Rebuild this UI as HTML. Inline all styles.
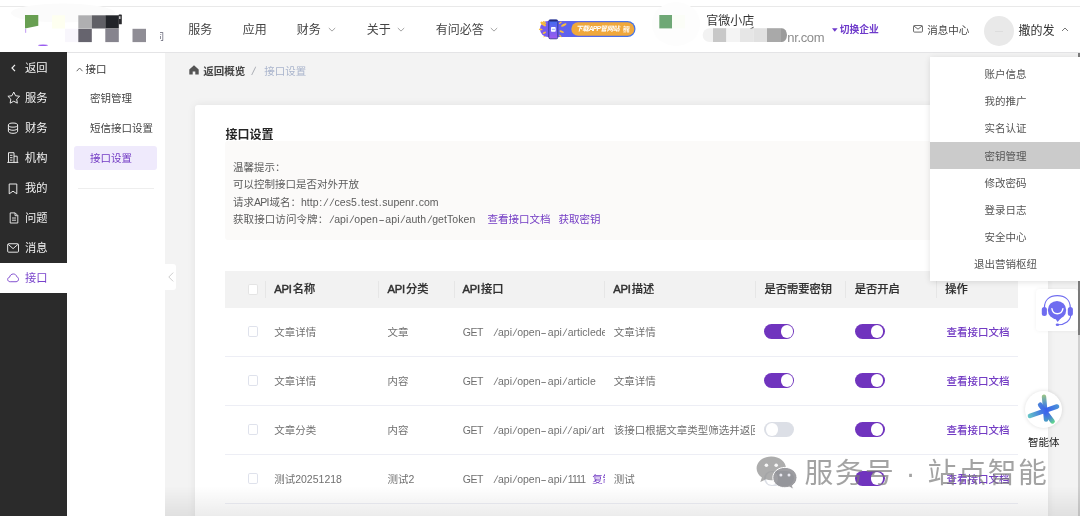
<!DOCTYPE html>
<html lang="zh-CN">
<head>
<meta charset="utf-8">
<title>接口设置</title>
<style>
*{box-sizing:border-box;margin:0;padding:0}
html,body{width:1080px;height:516px;overflow:hidden}
body{position:relative;background:#f3f3f3;font-family:"Liberation Sans","Noto Sans CJK SC",sans-serif;font-size:10.5px;color:#555;-webkit-font-smoothing:antialiased}
#w{position:absolute;left:0;top:0;width:1080px;height:516px;will-change:transform}
.a{position:absolute}
.t{position:absolute;white-space:nowrap;height:16px;line-height:16px}
svg{position:absolute;overflow:visible}
/* header */
#hdr{left:0;top:0;width:1080px;height:53px;background:#fff;border-bottom:1px solid #e4e4e6}
#topline{left:0;top:6px;width:1080px;height:1px;background:#e9e9e9}
.nav{font-size:12px;color:#444;margin-top:.3px}
/* sidebars */
#s1{left:0;top:52px;width:67px;height:464px;background:#2b2b2b}
#s1 .t{left:25px;font-size:11.25px;color:#f2f2f2}
#s1act{left:0;top:211px;width:67px;height:30px;background:#fff}
#s2{left:67px;top:53px;width:98px;height:463px;background:#fff}
/* main */
#card{left:195px;top:104.5px;width:853.2px;height:430px;background:#fff;border-radius:3px;box-shadow:0 0 9px rgba(0,0,0,.075)}
#tip{left:225px;top:141px;width:792px;height:99px;background:#fbfaf9;border-radius:3px}
.tip{left:233px;color:#5c5c5c}
.lk{color:#733cc4}
#thead{left:225px;top:271px;width:793px;height:36.5px;background:#f2f2f2}
.th{font-weight:500;color:#303030;top:281px;font-size:11.25px;-webkit-text-stroke:.2px #303030}
.vd{width:1px;height:17px;top:280.5px;background:#e6e6e6}
.row{left:225px;width:792.8px;height:1px;background:#edeef5}
.td{color:#707070}
.cb{width:10.4px;height:11px;left:248.1px;background:#fff;border:1px solid #dfe2ec;border-radius:1.8px}
.sw{width:30.2px;height:15.2px;border-radius:7.6px;background:#7034be}
.sw i{position:absolute;right:1.4px;top:1.4px;width:12.4px;height:12.4px;border-radius:50%;background:#fff}
.sw.off{background:#dcdfe6}
.sw.off i{right:auto;left:1.4px}
i.s,i.d,i.h,i.n{font-style:normal}
i.n{letter-spacing:-.9px}
.td i.s+i.s{margin-left:-.8px}
i.s{display:inline-block;width:5.9px;text-align:center;transform:skewX(-14deg);position:relative;left:.4px}
i.d{padding:0 .7px}
i.h{display:inline-block;width:7.35px;text-align:center;transform:scaleX(1.75)}
.g{letter-spacing:-.45px;margin-right:9.2px}
.cap{letter-spacing:-.7px;margin-right:.7px}
.thc{font-weight:400;letter-spacing:-.25px;margin-right:1.2px;-webkit-text-stroke:.45px #303030}
.op{left:946.4px;color:#733cc4;font-weight:500}
/* dropdown */
#dd{left:930px;top:56.5px;width:150px;height:224.5px;background:#fff;box-shadow:0 1px 6px rgba(0,0,0,.12)}
#dd .t{left:.4px;width:150px;text-align:center;color:#555}
#ddh{left:0;top:85px;width:150px;height:27px;background:#cbcbcb}
</style>
</head>
<body>
<div id="w">
<!-- main content -->
<div class="a" id="card"></div>
<!-- breadcrumb -->
<svg width="10" height="10" style="left:188.6px;top:65.4px" viewBox="0 0 10 10"><path d="M5 0.3 L9.7 4.6 V9.6 H6.3 V6.4 H3.7 V9.6 H0.3 V4.6 Z" fill="#555"/></svg>
<div class="t" style="left:203.2px;top:62.7px;font-weight:700;color:#444">返回概览</div>
<div class="t" style="left:252.4px;top:62.5px;color:#a8abb2;font-size:11.5px;transform:skewX(-12deg)">/</div>
<div class="t" style="left:264.2px;top:62.7px;color:#a9b4cc">接口设置</div>
<div class="t" style="left:225.5px;top:126.5px;font-size:12px;font-weight:700;color:#262626">接口设置</div>
<div class="a" id="tip"></div>
<div class="t tip" style="top:158.5px">温馨提示：</div>
<div class="t tip" style="top:175.8px">可以控制接口是否对外开放</div>
<div class="t tip" style="top:193.5px">请求<span class="cap">API</span>域名：http<i class="d">:</i><i class="s">/</i><i class="s">/</i>ces5<i class="d">.</i>test<i class="d">.</i>supenr<i class="d">.</i>com</div>
<div class="t tip" style="top:211px;letter-spacing:.08px">获取接口访问令牌：<i class="s">/</i>api<i class="s">/</i>open<i class="h">-</i>api<i class="s">/</i>auth<i class="s">/</i>getToken</div>
<div class="t lk" style="left:487.6px;top:211px">查看接口文档</div>
<div class="t lk" style="left:558.6px;top:211px">获取密钥</div>
<!-- table -->
<div class="a" id="thead"></div>
<div class="a cb" style="top:284.2px;border-color:#e4e4e4"></div>
<div class="a vd" style="left:264.9px"></div>
<div class="a vd" style="left:378.3px"></div>
<div class="a vd" style="left:453.5px"></div>
<div class="a vd" style="left:604.4px"></div>
<div class="a vd" style="left:755px"></div>
<div class="a vd" style="left:845.2px"></div>
<div class="a vd" style="left:935.6px"></div>
<div class="t th" style="left:274.2px"><span class="thc">API</span>名称</div>
<div class="t th" style="left:387.5px"><span class="thc">API</span>分类</div>
<div class="t th" style="left:462.5px"><span class="thc">API</span>接口</div>
<div class="t th" style="left:613.2px"><span class="thc">API</span>描述</div>
<div class="t th" style="left:764.4px">是否需要密钥</div>
<div class="t th" style="left:854.8px">是否开启</div>
<div class="t th" style="left:945.3px">操作</div>
<!-- row 1 -->
<div class="a cb" style="top:325.9px"></div>
<div class="t td" style="left:274.2px;top:324.0px">文章详情</div>
<div class="t td" style="left:387.5px;top:324.0px">文章</div>
<div class="t td" style="left:462.7px;top:324.0px;width:142.6px;overflow:hidden"><span class="g">GET</span><i class="s">/</i>api<i class="s">/</i>open<i class="h">-</i>api<i class="s">/</i>articledetail</div>
<div class="t td" style="left:613.7px;top:324.0px;width:141px;overflow:hidden">文章详情</div>
<div class="a sw" style="left:764.2px;top:324.0px"><i></i></div>
<div class="a sw" style="left:854.7px;top:324.0px"><i></i></div>
<div class="t op" style="top:324.0px">查看接口文档</div>
<div class="a row" style="top:355.50px"></div>
<!-- row 2 -->
<div class="a cb" style="top:374.9px"></div>
<div class="t td" style="left:274.2px;top:373.0px">文章详情</div>
<div class="t td" style="left:387.5px;top:373.0px">内容</div>
<div class="t td" style="left:462.7px;top:373.0px;width:142.6px;overflow:hidden"><span class="g">GET</span><i class="s">/</i>api<i class="s">/</i>open<i class="h">-</i>api<i class="s">/</i>article</div>
<div class="t td" style="left:613.7px;top:373.0px;width:141px;overflow:hidden">文章详情</div>
<div class="a sw" style="left:764.2px;top:373.0px"><i></i></div>
<div class="a sw" style="left:854.7px;top:373.0px"><i></i></div>
<div class="t op" style="top:373.0px">查看接口文档</div>
<div class="a row" style="top:404.50px"></div>
<!-- row 3 -->
<div class="a cb" style="top:423.9px"></div>
<div class="t td" style="left:274.2px;top:422.0px">文章分类</div>
<div class="t td" style="left:387.5px;top:422.0px">内容</div>
<div class="t td" style="left:462.7px;top:422.0px;width:142.6px;overflow:hidden"><span class="g">GET</span><i class="s">/</i>api<i class="s">/</i>open<i class="h">-</i>api<i class="s">/</i><i class="s">/</i>api<i class="s">/</i>article</div>
<div class="t td" style="left:613.7px;top:422.0px;width:141px;overflow:hidden">该接口根据文章类型筛选并返回分类</div>
<div class="a sw off" style="left:764.2px;top:422.0px"><i></i></div>
<div class="a sw" style="left:854.7px;top:422.0px"><i></i></div>
<div class="t op" style="top:422.0px">查看接口文档</div>
<div class="a row" style="top:453.50px"></div>
<!-- row 4 -->
<div class="a cb" style="top:472.9px"></div>
<div class="t td" style="left:274.2px;top:471.0px">测试20251218</div>
<div class="t td" style="left:387.5px;top:471.0px">测试2</div>
<div class="t td" style="left:462.7px;top:471.0px;width:142.6px;overflow:hidden"><span class="g">GET</span><i class="s">/</i>api<i class="s">/</i>open<i class="h">-</i>api<i class="s">/</i><i class="n">1</i><i class="n">1</i><i class="n">1</i><i class="n">1</i><span class="lk" style="margin-left:7px">复制</span></div>
<div class="t td" style="left:613.7px;top:471.0px;width:141px;overflow:hidden">测试</div>
<div class="a sw off" style="left:764.2px;top:471.0px"><i></i></div>
<div class="a sw" style="left:854.7px;top:471.0px"><i></i></div>
<div class="t op" style="top:471.0px">查看接口文档</div>
<div class="a row" style="top:502.50px"></div>
<!-- right gutter / scrollbar -->
<div class="a" style="left:1078.4px;top:53px;width:1.6px;height:463px;background:#cfcfcf"></div>
<div class="a" style="left:1078.4px;top:53px;width:1.6px;height:282px;background:#7c7c7c"></div>
<!-- floating service button -->
<div class="a" style="left:1036px;top:289.4px;width:41.8px;height:41.8px;background:#fff;border-radius:3.5px;box-shadow:0 0 4px rgba(0,0,0,.06)"></div>
<svg width="42" height="42" style="left:1036px;top:289.5px" viewBox="1036 289.5 42 42">
  <g fill="#6f6cf0">
    <circle cx="1057" cy="309.6" r="9.2"/>
    <path d="M1055 317.5 L1057.6 321.6 L1061 317.5 Z"/>
    <rect x="1041.8" y="306.6" width="5.1" height="9" rx="2.5"/>
    <rect x="1067.8" y="306.6" width="5.1" height="9" rx="2.5"/>
    <ellipse cx="1057.4" cy="324.3" rx="1.7" ry="1.2"/>
  </g>
  <path d="M1044.4 307.5 C1044.4 299 1050 295.2 1057.3 295.2 C1064.6 295.2 1070.3 299 1070.3 307.5" fill="none" stroke="#6f6cf0" stroke-width="1.2"/>
  <path d="M1070.7 314.5 C1070.7 320 1065 324.3 1058 324.3" fill="none" stroke="#6f6cf0" stroke-width="1.1"/>
  <path d="M1051.9 308.2 C1052.4 311.6 1054.6 313.3 1057.3 313.3 C1060 313.3 1062.3 311.6 1062.9 308.2" fill="none" stroke="#fff" stroke-width="1.4" stroke-linecap="round"/>
</svg>
<!-- agent -->
<div class="a" style="left:1024.8px;top:391.2px;width:36.8px;height:37px;border-radius:50%;background:#fff;box-shadow:0 0 4px rgba(0,0,0,.13)"></div>
<svg width="48" height="48" style="left:1020px;top:386px" viewBox="1020 386 48 48">
  <defs>
    <linearGradient id="g1" gradientUnits="userSpaceOnUse" x1="1028.4" y1="416.5" x2="1058.6" y2="406"><stop offset="0" stop-color="#66c6c6"/><stop offset="0.35" stop-color="#4a86dc"/><stop offset="0.6" stop-color="#3a60ee"/><stop offset="1" stop-color="#4c94d6"/></linearGradient>
    <linearGradient id="g2" gradientUnits="userSpaceOnUse" x1="1043.7" y1="394.8" x2="1046" y2="421.3"><stop offset="0" stop-color="#9cc684"/><stop offset="0.3" stop-color="#5a98c8"/><stop offset="0.6" stop-color="#3a60ee"/><stop offset="1" stop-color="#4a9cc6"/></linearGradient>
    <linearGradient id="g3" gradientUnits="userSpaceOnUse" x1="1039" y1="403.2" x2="1053.5" y2="422.7"><stop offset="0" stop-color="#4c84d8"/><stop offset="0.45" stop-color="#3a60ee"/><stop offset="0.75" stop-color="#4a8ad0"/><stop offset="1" stop-color="#62d88c"/></linearGradient>
  </defs>
  <line x1="1044" y1="396.6" x2="1046" y2="419.6" stroke="url(#g2)" stroke-width="4.4" stroke-linecap="round"/>
  <line x1="1040.2" y1="404.8" x2="1052.5" y2="421.3" stroke="url(#g3)" stroke-width="4.7" stroke-linecap="round"/>
  <line x1="1030" y1="415.9" x2="1057" y2="406.5" stroke="url(#g1)" stroke-width="4.6" stroke-linecap="round"/>
</svg>
<div class="t" style="left:1028px;top:434.4px;font-weight:400;color:#1c1c1c">智能体</div>
<!-- bottom fade -->
<div class="a" style="left:0;top:486px;width:1080px;height:30px;background:linear-gradient(rgba(0,0,0,0),rgba(0,0,0,.075))"></div>
<!-- watermark -->
<svg width="44" height="36" style="left:755px;top:455px" viewBox="0 0 44 36" opacity="0.75">
  <path d="M16.3 1.5 C8 1.5 1.6 6.8 1.6 13.4 C1.6 17 3.6 20.2 6.9 22.4 L5.3 27 L10.9 24.2 C12.6 24.8 14.4 25.3 16.3 25.3 C24.6 25.3 31 20 31 13.4 C31 6.8 24.6 1.5 16.3 1.5 Z" fill="#929292"/>
  <circle cx="11.4" cy="10.2" r="1.8" fill="#f6f6f6"/><circle cx="21.2" cy="10.2" r="1.8" fill="#f6f6f6"/>
  <path d="M29.9 12.4 C23 12.4 17.8 17 17.8 22.6 C17.8 28.3 23 32.8 29.9 32.8 C31.4 32.8 32.9 32.5 34.3 32.1 L38.7 34.4 L37.4 30.6 C40.2 28.8 42 26 42 22.6 C42 17 36.7 12.4 29.9 12.4 Z" fill="#7e7e83" stroke="#fff" stroke-width="1"/>
  <circle cx="25.9" cy="19.9" r="1.5" fill="#ececf2"/><circle cx="34" cy="19.9" r="1.5" fill="#ececf2"/>
</svg>
<div class="t" style="left:804.6px;top:453px;height:40px;line-height:40px;font-size:28.8px;letter-spacing:1.4px;word-spacing:1.2px;color:rgba(120,120,120,.68)">服务号 · 站点智能</div>

<!-- header -->
<div class="a" id="hdr"></div>
<div class="a" id="topline"></div>
<!-- logo mosaic -->
<svg width="170" height="52" style="left:0;top:0" viewBox="0 0 170 52">
  <ellipse cx="63" cy="13" rx="52" ry="9.5" fill="#fbfbfb"/>
  <polygon points="25,15 38.3,15 38.3,25.8 25,28.6" fill="#689f52"/>
  <rect x="52" y="15.3" width="13" height="13.2" fill="#fefff0"/>
  <rect x="78.3" y="15.3" width="13.5" height="13.2" fill="#afafb1"/>
  <rect x="91.8" y="15.3" width="13.5" height="13.2" fill="#606066"/>
  <rect x="105.3" y="15.3" width="13.5" height="13.2" fill="#222429"/>
  <rect x="118.6" y="14.6" width="3.2" height="9.7" rx="0.6" fill="#2a2a2e"/>
  <rect x="119.3" y="16.2" width="1.1" height="2.8" fill="#fff"/>
  <rect x="65" y="28.8" width="13.3" height="13.3" fill="#f8f6fc"/>
  <rect x="78.3" y="28.8" width="13.5" height="13.3" fill="#66646e"/>
  <rect x="105.3" y="28.8" width="13.5" height="13.3" fill="#86848e"/>
  <rect x="132.5" y="28.8" width="13.5" height="13.3" fill="#8f8d95"/>
  <rect x="25" y="28.8" width="1.2" height="4" fill="#c9a8f5"/>
  <ellipse cx="43" cy="45.3" rx="5" ry="0.7" fill="#9a5cf0"/>
</svg>
<div class="t" style="left:159.6px;top:29px;font-size:9.5px;color:#667;width:4.6px;overflow:hidden;direction:rtl">司</div>
<!-- nav -->
<div class="t nav" style="left:188.3px;top:21.5px">服务</div>
<div class="t nav" style="left:242.7px;top:21.5px">应用</div>
<div class="t nav" style="left:296.7px;top:21.5px">财务</div>
<div class="t nav" style="left:366.7px;top:21.5px">关于</div>
<div class="t nav" style="left:435.7px;top:21.5px">有问必答</div>
<svg width="8" height="5" style="left:327.8px;top:26.8px" viewBox="0 0 8 5"><path d="M0.8 1 L4 4.1 L7.2 1" fill="none" stroke="#999" stroke-width="0.9"/></svg>
<svg width="8" height="5" style="left:397.3px;top:26.8px" viewBox="0 0 8 5"><path d="M0.8 1 L4 4.1 L7.2 1" fill="none" stroke="#999" stroke-width="0.9"/></svg>
<svg width="8" height="5" style="left:490.3px;top:26.8px" viewBox="0 0 8 5"><path d="M0.8 1 L4 4.1 L7.2 1" fill="none" stroke="#999" stroke-width="0.9"/></svg>
<!-- app banner -->
<svg width="100" height="24" style="left:538px;top:18px" viewBox="538 18 100 24">
  <defs>
    <linearGradient id="bg1" x1="0" y1="0" x2="1" y2="0"><stop offset="0" stop-color="#7a5af0"/><stop offset="0.3" stop-color="#5b62ee"/><stop offset="1" stop-color="#3f74ea"/></linearGradient>
    <linearGradient id="ph1" x1="0" y1="0" x2="0" y2="1"><stop offset="0" stop-color="#3b6cf0"/><stop offset="1" stop-color="#a05af0"/></linearGradient>
  </defs>
  <rect x="540" y="21" width="95.5" height="16" rx="8" fill="url(#bg1)"/>
  <rect x="571.3" y="22.2" width="63" height="13.6" rx="6.8" fill="#f0a83c"/>
  <g fill="#f8bf3a">
    <ellipse cx="543.2" cy="24" rx="3.3" ry="1.35" transform="rotate(38 543.2 24)"/>
    <ellipse cx="544.6" cy="22.6" rx="2" ry="0.9" transform="rotate(38 544.6 22.6)"/>
    <ellipse cx="540.7" cy="29.4" rx="1.9" ry="0.9" transform="rotate(8 540.7 29.4)"/>
    <ellipse cx="544.4" cy="32.8" rx="1.8" ry="0.9" transform="rotate(-28 544.4 32.8)"/>
    <ellipse cx="544.2" cy="36.6" rx="1" ry="0.5" transform="rotate(-25 544.2 36.6)"/>
    <ellipse cx="560.3" cy="22.8" rx="1.7" ry="0.75" transform="rotate(-40 560.3 22.8)"/>
    <ellipse cx="563.8" cy="25" rx="3" ry="1.2" transform="rotate(-28 563.8 25)"/>
    <ellipse cx="561.7" cy="31.6" rx="2.4" ry="1" transform="rotate(22 561.7 31.6)"/>
    <ellipse cx="560.4" cy="36.1" rx="1.5" ry="0.7" transform="rotate(48 560.4 36.1)"/>
  </g>
  <rect x="548.8" y="19.8" width="9" height="19" rx="1.4" fill="url(#ph1)" stroke="#2b2f86" stroke-width="0.8"/>
  <rect x="549.4" y="20.1" width="7.8" height="1.3" rx="0.6" fill="#262a78"/>
  <rect x="551" y="27" width="4.7" height="4.7" rx="0.8" fill="#fff"/>
  <rect x="551.8" y="28.7" width="3.1" height="1.4" fill="#a9bdf9"/>
</svg>
<div class="t" style="left:576px;top:21px;font-size:6.7px;font-weight:700;font-style:italic;color:#fff;letter-spacing:-.35px">下载<span style="letter-spacing:-.7px">APP</span>管网站</div>
<div class="t" style="left:622.9px;top:26.3px;font-size:8px;font-weight:700;color:#fff;line-height:8.6px;height:18px;white-space:normal;width:16.5px;transform:scale(.42);transform-origin:0 0">立即查看</div>
<!-- shop -->
<svg width="200" height="52" style="left:640px;top:0" viewBox="640 0 200 52">
  <ellipse cx="676" cy="24" rx="24" ry="22" fill="#fdfdfd"/>
  <rect x="659.3" y="15" width="12.8" height="13.4" fill="#6fa876"/>
  <rect x="672.1" y="15" width="13" height="13.4" fill="#fbfdf7"/>
  <path d="M713 28.2 h-3.5 a6.9 6.9 0 0 0 0 13.8 h3.5z" fill="#f2f2f2"/>
  <rect x="713" y="28.2" width="13.4" height="13.8" fill="#c8c8c8"/>
  <rect x="726.4" y="28.2" width="13.6" height="13.8" fill="#f4f4f4"/>
  <rect x="740" y="28.2" width="13.3" height="13.8" fill="#e6e6e6"/>
  <rect x="753.3" y="28.2" width="13.7" height="13.8" fill="#e1e1e1"/>
  <rect x="767" y="28.2" width="14" height="13.8" fill="#a9a9a9"/>
  <path d="M781 28.2 h1 a5 6.9 0 0 1 0 13.8 h-1z" fill="#9b9b9b"/>
  <path d="M749.7 29 l3.8 -2.4 v1.4z" fill="#555"/>
</svg>
<div class="t nav" style="left:706.2px;top:12.3px;color:#333">官微小店</div>
<div class="t" style="left:787.3px;top:29.6px;font-size:13px;letter-spacing:-.35px;color:#8c8c8c">nr.com</div>
<!-- switch company -->
<svg width="5.6" height="4" style="left:832.1px;top:28px" viewBox="0 0 6 4"><path d="M0 0h6L3 4z" fill="#6e3acb"/></svg>
<div class="t" style="left:839.7px;top:22px;font-size:9.75px;font-weight:700;color:#6e3acb">切换企业</div>
<!-- message center -->
<svg width="10" height="7.8" style="left:913px;top:25.1px" viewBox="0 0 11 9" preserveAspectRatio="none"><rect x="0.6" y="0.6" width="9.8" height="7.6" rx="1" fill="none" stroke="#444" stroke-width="0.9"/><path d="M1 1.2 L5.5 4.8 L10 1.2" fill="none" stroke="#444" stroke-width="0.9"/></svg>
<div class="t" style="left:927.3px;top:22px;font-size:10.5px;color:#444">消息中心</div>
<!-- user -->
<div class="a" style="left:984px;top:15.5px;width:30px;height:30px;border-radius:50%;background:#e9e9e9"></div>
<div class="a" style="left:995px;top:30.5px;width:8px;height:1px;background:#ddd"></div>
<div class="t nav" style="left:1018.4px;top:22.7px;color:#333">撒的发</div>
<svg width="8" height="5" style="left:1061px;top:26.5px" viewBox="0 0 8 5"><path d="M1 4 L4 1 L7 4" fill="none" stroke="#777" stroke-width="1"/></svg>

<!-- sidebars -->
<div class="a" id="s1">
  <div class="a" id="s1act"></div>
  <div class="t" style="top:7.6px">返回</div>
  <div class="t" style="top:37.6px">服务</div>
  <div class="t" style="top:67.6px">财务</div>
  <div class="t" style="top:97.6px">机构</div>
  <div class="t" style="top:127.6px">我的</div>
  <div class="t" style="top:157.6px">问题</div>
  <div class="t" style="top:187.6px">消息</div>
  <div class="t" style="top:218.4px;color:#7842cc">接口</div>
  <!-- icons -->
  <svg width="5" height="8" style="left:10.8px;top:11.6px" viewBox="0 0 5 8"><path d="M4 0.8 L1 4 L4 7.2" fill="none" stroke="#f2f2f2" stroke-width="1.2"/></svg>
  <svg width="13.5" height="13.5" style="left:6.55px;top:39px" viewBox="0 0 12 12"><path d="M6 0.9 L7.6 4.2 L11.2 4.7 L8.6 7.2 L9.2 10.8 L6 9.1 L2.8 10.8 L3.4 7.2 L0.8 4.7 L4.4 4.2 Z" fill="none" stroke="#f2f2f2" stroke-width="0.85" stroke-linejoin="round"/></svg>
  <svg width="12" height="12.4" style="left:7.05px;top:69.6px" viewBox="0 0 12 12" preserveAspectRatio="none"><g fill="none" stroke="#f2f2f2" stroke-width="0.95"><ellipse cx="6" cy="3" rx="4.6" ry="2"/><path d="M1.4 3 V9 C1.4 10.1 3.4 11 6 11 C8.6 11 10.6 10.1 10.6 9 V3"/><path d="M1.4 6 C1.4 7.1 3.4 8 6 8 C8.6 8 10.6 7.1 10.6 6"/></g></svg>
  <svg width="12" height="12" style="left:7.2px;top:99.7px" viewBox="0 0 12 12"><g fill="none" stroke="#f2f2f2" stroke-width="0.95"><path d="M1.5 10.4 V0.7 H7 V10.4"/><path d="M7 4.2 H10.2 V10.4"/><path d="M0.3 10.4 H11.3"/><path d="M3 3.3 H5.5 M3 5.7 H5.5 M3 8.1 H5.5"/></g></svg>
  <svg width="10" height="12" style="left:7.9px;top:130.6px" viewBox="0 0 10 12"><path d="M1.2 1 H8.8 V10.8 L5 8.2 L1.2 10.8 Z" fill="none" stroke="#f2f2f2" stroke-width="0.95" stroke-linejoin="round"/></svg>
  <svg width="10" height="12" style="left:8.5px;top:160.4px" viewBox="0 0 10 12"><g fill="none" stroke="#f2f2f2" stroke-width="0.9" stroke-linejoin="round"><path d="M1.2 0.9 H6.2 L8.8 3.5 V11 H1.2 Z"/><path d="M6 1 V3.7 H8.7"/><path d="M3 6 H7 M3 8.2 H7"/></g></svg>
  <svg width="12.2" height="10.3" style="left:7px;top:190.8px" viewBox="0 0 13 11"><g fill="none" stroke="#f2f2f2" stroke-width="1"><rect x="0.7" y="0.8" width="11.6" height="9" rx="1"/><path d="M1.2 1.4 L6.5 6 L11.8 1.4"/></g></svg>
  <svg width="12.2" height="9.8" style="left:7.2px;top:220.9px" viewBox="0 0 13 11" preserveAspectRatio="none"><path d="M3.4 9.8 C1.8 9.8 0.7 8.6 0.7 7.2 C0.7 5.9 1.6 4.9 2.8 4.7 C3.1 2.6 4.7 1.1 6.7 1.1 C8.6 1.1 10.1 2.4 10.5 4.3 C11.6 4.7 12.3 5.8 12.3 7 C12.3 8.6 11.1 9.8 9.6 9.8 Z" fill="none" stroke="#7842cc" stroke-width="1"/></svg>
</div>
<div class="a" id="s2">
  <svg width="8" height="5" style="left:9.2px;top:13.6px" viewBox="0 0 8 5"><path d="M0.7 4.2 L3.6 1 L6.5 4.2" fill="none" stroke="#555" stroke-width="0.9"/></svg>
  <div class="t" style="left:18.6px;top:7.8px;font-size:10.5px;color:#333">接口</div>
  <div class="t" style="left:23px;top:37px;color:#444">密钥管理</div>
  <div class="t" style="left:23px;top:67px;color:#444">短信接口设置</div>
  <div class="a" style="left:7px;top:93px;width:83px;height:24px;border-radius:3px;background:#efeafc"></div>
  <div class="t" style="left:23px;top:97px;color:#733cc4">接口设置</div>
  <div class="a" style="left:11px;top:134.8px;width:75.5px;height:1px;background:#eee"></div>
</div>
<!-- collapse handle -->
<div class="a" style="left:165px;top:264px;width:11px;height:26px;background:#fff;border-radius:0 3px 3px 0"></div>
<svg width="6" height="10" style="left:167.5px;top:272.3px" viewBox="0 0 6 10"><path d="M5.2 0.6 L0.8 5 L5.2 9.4" fill="none" stroke="#c0c0c0" stroke-width="0.8"/></svg>

<!-- dropdown -->
<div class="a" id="dd">
  <div class="a" id="ddh"></div>
  <div class="t" style="top:9.4px">账户信息</div>
  <div class="t" style="top:36.6px">我的推广</div>
  <div class="t" style="top:63.8px">实名认证</div>
  <div class="t" style="top:91.0px">密钥管理</div>
  <div class="t" style="top:118.2px">修改密码</div>
  <div class="t" style="top:145.4px">登录日志</div>
  <div class="t" style="top:172.6px">安全中心</div>
  <div class="t" style="top:199.8px">退出营销枢纽</div>
</div>
</div>
</body>
</html>
